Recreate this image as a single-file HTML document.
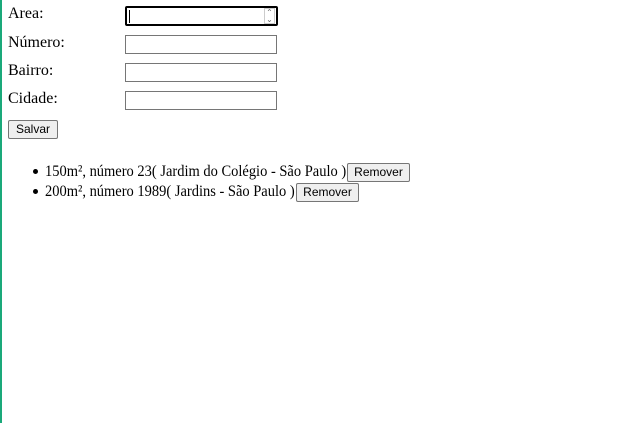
<!DOCTYPE html>
<html><head><style>
body{margin:0;width:618px;height:423px;background:#fff;font-family:"Liberation Serif",serif;font-size:16px;color:#000;position:relative;overflow:hidden}
.gb{position:absolute;left:0;top:0;width:2px;height:423px;background:#1aa97a}
.l{position:absolute;left:8px;line-height:18px}
.i{position:absolute;left:125px;width:150px;height:17px;border:1px solid #767676;background:#fff}
.b{position:absolute;font-family:"Liberation Sans",sans-serif;font-size:12px;background:#efefef;border:1px solid #767676;border-radius:2px;line-height:17px;text-align:center;box-sizing:border-box;height:19px}
.li{position:absolute;left:45px;line-height:18px;white-space:nowrap;transform:scaleX(0.905);transform-origin:0 0}
.dot{position:absolute;left:33px;width:5px;height:5px;border-radius:50%;background:#000}
</style></head><body>
<div class="gb"></div>
<div class="l" style="top:5px">Area:</div>
<div class="i" style="top:6px;border:2px solid #000;width:149px;height:16px;border-radius:2px"><div style="position:absolute;left:2px;top:2px;width:1px;height:13px;background:#000"></div><div style="position:absolute;right:1px;top:0px;width:11px;height:16px;border:1px solid #ccc;box-sizing:border-box;font-size:8px;line-height:7px;color:#666;text-align:center;font-family:'DejaVu Sans'">⌃<br>⌄</div></div>
<div class="l" style="top:34px">Número:</div>
<div class="i" style="top:35px"></div>
<div class="l" style="top:62px">Bairro:</div>
<div class="i" style="top:63px"></div>
<div class="l" style="top:90px">Cidade:</div>
<div class="i" style="top:91px"></div>
<div class="b" style="left:8px;top:120px;width:50px">Salvar</div>
<div class="dot" style="top:169px"></div>
<div class="li" style="top:163px">150m², número 23( Jardim do Colégio - São Paulo )</div>
<div class="b" style="left:347px;top:163px;width:63px">Remover</div>
<div class="dot" style="top:189px"></div>
<div class="li" style="top:183px">200m², número 1989( Jardins - São Paulo )</div>
<div class="b" style="left:296px;top:183px;width:63px">Remover</div>
</body></html>
